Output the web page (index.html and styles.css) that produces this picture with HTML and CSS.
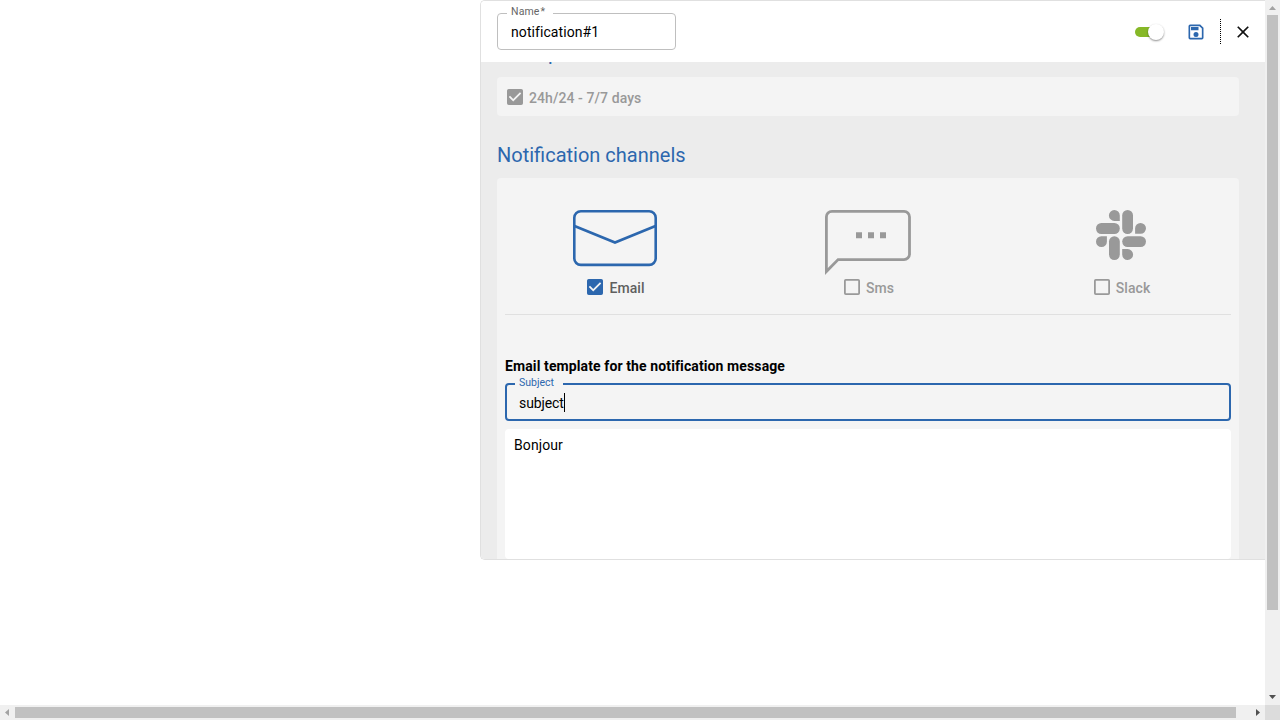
FILE: index.html
```
<!DOCTYPE html>
<html lang="en">
<head>
<meta charset="utf-8">
<title>Notification</title>
<link rel="stylesheet" href="styles.css">
</head>
<body>
<div class="window">
  <main class="viewport">
    <section class="panel">
      <header class="panel-header">
        <div class="field name-field"><label class="field-label">Name<span class="star">*</span></label><span class="field-value">notification#1</span></div>
        <div class="actions">
          <span class="toggle"><span class="knob"></span></span>
          <svg class="save" viewBox="0 0 24 24"><path d="M17 3H5a2 2 0 0 0-2 2v14a2 2 0 0 0 2 2h14a2 2 0 0 0 2-2V7l-4-4zm2 16H5V5h11.17L19 7.83V19zm-7-7a3 3 0 1 0 0 6 3 3 0 0 0 0-6zM6 6h9v4H6V6z"/></svg>
          <span class="separator"></span>
          <svg class="close" viewBox="0 0 24 24"><path d="M19 6.41L17.59 5 12 10.59 6.41 5 5 6.41 10.59 12 5 17.59 6.41 19 12 13.41 17.59 19 19 17.59 13.41 12z"/></svg>
        </div>
      </header>
      <div class="panel-body">
        <h2 class="title title-period">Time period</h2>
        <div class="card period">
          <span class="check muted"><svg class="box" viewBox="0 0 18 18"><path d="M16 0H2a2 2 0 0 0-2 2v14a2 2 0 0 0 2 2h14a2 2 0 0 0 2-2V2a2 2 0 0 0-2-2zM7 14L2 9l1.41-1.41L7 11.17l7.59-7.59L16 5z"/></svg><span class="check-text">24h/24 - 7/7 days</span></span>
        </div>
        <h2 class="title title-channels">Notification channels</h2>
        <div class="card channels">
          <div class="channel-list">
            <div class="channel email">
              <svg class="art" width="86" height="66" viewBox="0 0 86 66"><g fill="none" stroke="#2c67ae" stroke-width="2.6"><rect x="2.3" y="1.3" width="81.4" height="53.6" rx="6.5"/><path d="M2.5 16L43 32.5 83.5 16"/></g></svg>
              <span class="check"><svg class="box blue" viewBox="0 0 18 18"><path d="M16 0H2a2 2 0 0 0-2 2v14a2 2 0 0 0 2 2h14a2 2 0 0 0 2-2V2a2 2 0 0 0-2-2zM7 14L2 9l1.41-1.41L7 11.17l7.59-7.59L16 5z"/></svg><span class="check-text">Email</span></span>
            </div>
            <div class="channel sms">
              <svg class="art" width="86" height="66" viewBox="0 0 86 66"><path d="M1.4 61.5V7a5.5 5.5 0 0 1 5.5-5.6h72a5.5 5.5 0 0 1 5.6 5.6v37.2a5.5 5.5 0 0 1-5.6 5.4H13.1z" fill="none" stroke="#999" stroke-width="2.8"/><path d="M31 22.3h6v6h-6zm12 0h6v6h-6zm12 0h6v6h-6z" fill="#999"/></svg>
              <span class="check muted"><svg class="box" viewBox="0 0 18 18"><path d="M16 2v14H2V2h14m0-2H2a2 2 0 0 0-2 2v14a2 2 0 0 0 2 2h14a2 2 0 0 0 2-2V2a2 2 0 0 0-2-2z"/></svg><span class="check-text">Sms</span></span>
            </div>
            <div class="channel slack">
              <svg class="art" width="50" height="66" viewBox="0 0 50 66"><g fill="#999"><rect x="26.2" width="10.8" height="24" rx="5.4"/><rect y="13" width="23.8" height="11" rx="5.4"/><rect x="13" y="26.2" width="10.8" height="23.8" rx="5.4"/><rect x="26.2" y="26.2" width="23.8" height="10.8" rx="5.4"/><path d="M23.8 10.9h-5.4A5.45 5.45 0 1 1 23.8 5.4zM39.1 23.8v-5.4a5.45 5.45 0 1 1 5.5 5.4zM26.2 39.1h5.4a5.45 5.45 0 1 1-5.4 5.5zM10.9 26.2v5.4a5.45 5.45 0 1 1-5.5-5.4z"/></g></svg>
              <span class="check muted"><svg class="box" viewBox="0 0 18 18"><path d="M16 2v14H2V2h14m0-2H2a2 2 0 0 0-2 2v14a2 2 0 0 0 2 2h14a2 2 0 0 0 2-2V2a2 2 0 0 0-2-2z"/></svg><span class="check-text">Slack</span></span>
            </div>
          </div>
          <h3 class="template-title">Email template for the notification message</h3>
          <div class="field subject-field"><label class="field-label">Subject</label><span class="field-value">subject</span><span class="caret"></span></div>
          <div class="message">Bonjour</div>
        </div>
      </div>
    </section>
  </main>
  <div class="vbar"><svg class="arrow" viewBox="0 0 15 15"><path d="M4 10h7L7.500 6z" fill="#a3a3a3"/></svg><span class="vthumb"></span><svg class="arrow" viewBox="0 0 15 15"><path d="M4 5h7L7.500 9z" fill="#505050"/></svg></div>
  <div class="hbar"><svg class="arrow" viewBox="0 0 15 15"><path d="M9 4v7L5 7.500z" fill="#a3a3a3"/></svg><span class="hthumb"></span><svg class="arrow" viewBox="0 0 15 15"><path d="M6 4v7L10 7.500z" fill="#505050"/></svg></div>
  <div class="corner"></div>
</div>
</body>
</html>
```
FILE: styles.css
```
* { box-sizing: border-box; }
body { margin: 0; background: #fff; font-family: Roboto, "Liberation Sans", sans-serif; color: #000; overflow: hidden; }
svg { display: block; flex: none; }
.window { display: grid; grid-template: 705px 15px / 1265px 15px; width: 1280px; height: 720px; }
.viewport { display: flex; justify-content: flex-end; align-items: flex-start; overflow: hidden; }
.panel { display: flex; flex-direction: column; width: 785px; height: 560px; border: 1px solid #e0e0e0; border-right: 0; border-radius: 5px 0 0 5px; overflow: hidden; }
.panel-header { display: flex; flex: none; justify-content: space-between; align-items: flex-start; height: 61px; padding: 12px 12px 0 16px; background: #fff; }
.field { position: relative; display: flex; align-items: center; font-size: 14px; border-radius: 4px; }
.field-label { position: absolute; top: -9px; padding: 0 0 0 4px; font-size: 10.5px; line-height: 13px; letter-spacing: .15px; }
.name-field { width: 179px; height: 37px; border: 1px solid #bfbfbf; padding-left: 13px; }
.name-field .field-label { left: 9px; width: 46px; background: #fff; color: #666; }
.star { margin-left: 1px; }
.field-value { letter-spacing: .08px; }
.actions { display: flex; align-items: center; height: 37px; }
.toggle { display: flex; justify-content: flex-end; align-items: center; width: 28px; height: 10px; border-radius: 5px; background: #86b827; }
.knob { flex: none; width: 16px; height: 16px; margin-right: -1px; border-radius: 50%; background: #fff; box-shadow: 0 1px 2px rgba(0,0,0,.45); }
.save { width: 20px; height: 20px; margin-left: 23px; fill: #2c67ae; }
.separator { height: 25px; margin-left: 14px; border-left: 1px dotted #000; }
.close { width: 20px; height: 20px; margin-left: 12px; fill: #111; }
.panel-body { flex: 1; min-height: 0; padding: 0 26px 0 16px; background: #ececec; overflow: hidden; }
.title { margin: 0; font-size: 20px; line-height: 24px; font-weight: 400; color: #2c67ae; }
.title-period { margin-top: -21px; margin-bottom: 12px; letter-spacing: .2px; }
.card { background: #f4f4f4; border-radius: 4px; }
.period { height: 39px; padding: 10px; }
.title-channels { margin: 27px 0 11px; }
.channels { padding: 0 8px; height: 440px; }
.check { display: flex; align-items: center; gap: 6px; height: 20px; font-size: 14px; font-weight: 500; letter-spacing: .08px; color: #5f5f5f; }
.check.muted { color: #999; }
.check-text { padding-top: 2px; }
.box { width: 16px; height: 16px; fill: #999; }
.box.blue { fill: #2c67ae; }
.channel-list { display: flex; gap: 167px; height: 137px; padding: 32px 0 0 67px; border-bottom: 1px solid #e0e0e0; }
.channel { display: flex; flex: none; flex-direction: column; align-items: center; width: 86px; }
.channel .check { margin-top: 1px; padding-left: 2px; }
.template-title { margin: 41px 0 7px; font-size: 14px; line-height: 20px; font-weight: 700; letter-spacing: .11px; }
.subject-field { width: 726px; height: 38px; border: 2px solid #2c67ae; padding-left: 12px; }
.subject-field .field-label { top: -9px; left: 8px; width: 48px; background: #f4f4f4; color: #2c67ae; letter-spacing: 0; }
.subject-field .field-value { padding-top: 2px; letter-spacing: -.1px; }
.caret { width: 1px; height: 19px; background: #000; }
.message { height: 130px; margin-top: 8px; padding: 7px 9px; background: #fff; border-radius: 4px; font-size: 14px; line-height: 18px; letter-spacing: .1px; }
.vbar, .hbar { display: flex; align-items: center; background: #f0f0f0; }
.vbar { flex-direction: column; }
.arrow { width: 15px; height: 15px; }
.vthumb { width: 11px; height: 595px; margin-bottom: 80px; background: #c1c1c1; }
.hthumb { width: 1221px; height: 11px; margin-right: 14px; background: #c1c1c1; }
.corner { background: #dcdcdc; }
```
